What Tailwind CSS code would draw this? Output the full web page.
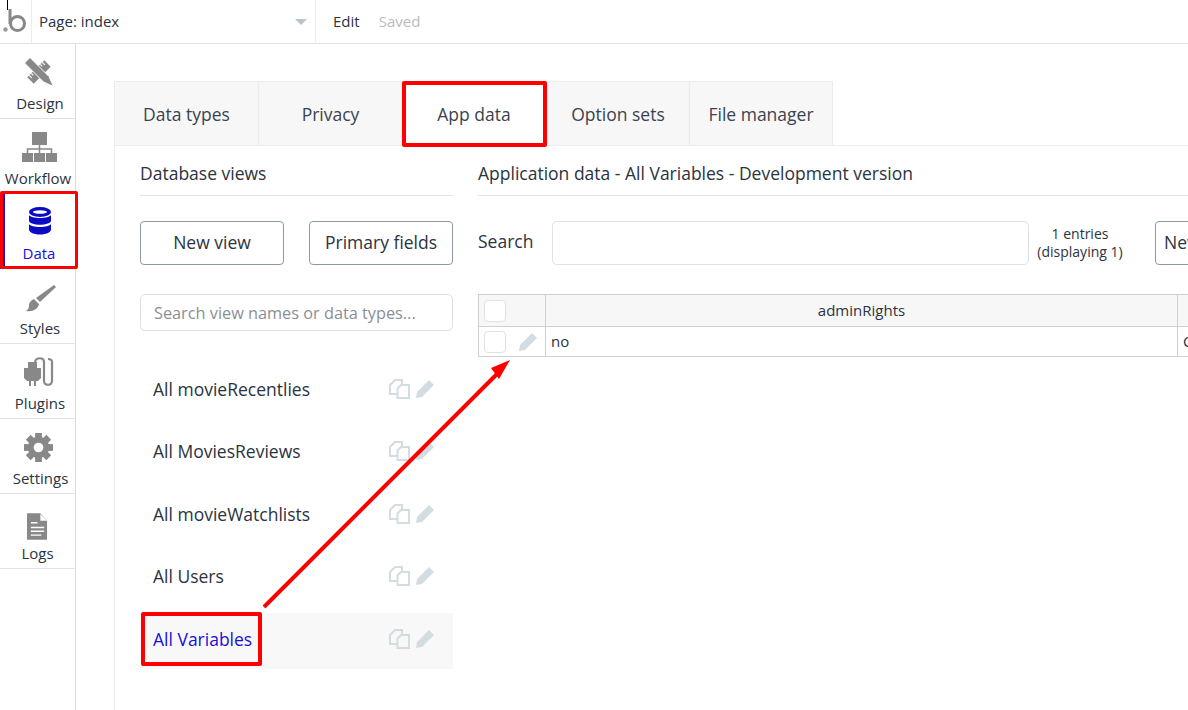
<!DOCTYPE html>
<html lang="en">
<head>
    <meta charset="UTF-8">
    <title>Data - App data</title>
    <script src="https://cdn.jsdelivr.net/npm/@tailwindcss/browser@4"></script>
</head>
<body class="bg-white">
<div class="relative w-[1188px] h-[710px] overflow-hidden font-['Open_Sans',sans-serif] text-[#2b3340]">

    <!-- top bar -->
    <header class="flex h-[44px] border-b border-[#e2e2e2]">
        <div class="relative w-[32px] border-r border-[#ececec]">
            <div class="absolute left-[7px] top-0 w-[1px] h-[10px] bg-black"></div>
            <svg class="absolute left-[3px] top-[8px]" width="24" height="26" viewBox="0 0 24 26">
                <circle cx="2.5" cy="21.5" r="2.2" fill="#999"/>
                <path d="M7 1v15" stroke="#888" stroke-width="3" fill="none"/>
                <circle cx="14.5" cy="15.5" r="7" stroke="#888" stroke-width="3" fill="none"/>
            </svg>
        </div>
        <div class="relative w-[284px] border-r border-[#ececec] pl-[7px] flex items-center text-[15px]">
            Page: index
            <div class="absolute left-[263px] top-[19px] w-0 h-0 border-l-[6px] border-r-[6px] border-t-[6px] border-l-transparent border-r-transparent border-t-[#b9c4cc]"></div>
        </div>
        <div class="flex items-center pl-[17px] gap-[19px] text-[15px]">
            <span>Edit</span>
            <span class="text-[#bbbbbb]">Saved</span>
        </div>
    </header>

    <div class="flex">
        <!-- sidebar -->
        <nav class="w-[76px] h-[666px] border-r border-[#dedede] text-[15px] shrink-0">
            <div class="h-[75px] border-b border-[#e2e2e2] flex flex-col items-center">
                <svg class="mt-[13px] ml-[3px]" width="30" height="30" viewBox="0 0 30 30" fill="#888">
                    <rect x="-12" y="-4.500" width="24" height="9" transform="translate(15 15) rotate(-45)"/>
                    <path d="M18.300 5.300l2.500 2.500M16.300 7.300l2 2M5.300 18.300l2.500 2.500M7.300 16.300l2 2" stroke="#fff" stroke-width="1.200"/>
                    <path d="M0.500 6L6 0.500 25 19.500l4.500 10-10-4.500z" stroke="#fff" stroke-width="1"/>
                </svg>
                <span class="mt-[6px] ml-[5px] leading-[20px]">Design</span>
            </div>
            <div class="h-[75px] border-b border-[#e2e2e2] flex flex-col items-center">
                <svg class="mt-[13px] ml-[5px]" width="36" height="30" viewBox="0 0 36 30">
                    <rect x="10" y="0" width="15" height="13" fill="#888"/>
                    <path d="M17.500 13v8M5.500 21v-4h24v4" stroke="#888" stroke-width="1.500" fill="none"/>
                    <rect x="0" y="21" width="11" height="9" fill="#888"/>
                    <rect x="12" y="21" width="11" height="9" fill="#888"/>
                    <rect x="24" y="21" width="11" height="9" fill="#888"/>
                </svg>
                <span class="mt-[6px] ml-[1px] leading-[20px]">Workflow</span>
            </div>
            <div class="h-[75px] border-b border-[#e2e2e2] flex flex-col items-center text-[#1a10d8] border-l-[5px] border-l-[#1a10d8]">
                <svg class="mt-[13px]" width="24" height="28" viewBox="0 0 24 28" fill="#0b0bc4">
                    <ellipse cx="12" cy="5" rx="11" ry="5"/>
                    <path d="M1 8c2 4 20 4 22 0v6c-2 5-20 5-22 0z"/>
                    <path d="M1 17c2 4 20 4 22 0v6c-2 6-20 6-22 0z"/>
                    <ellipse cx="12" cy="5" rx="7" ry="1.800" fill="#fff"/>
                </svg>
                <span class="mt-[8px] -ml-[2px] leading-[20px]">Data</span>
            </div>
            <div class="h-[75px] border-b border-[#e2e2e2] flex flex-col items-center">
                <svg class="mt-[15px] ml-[6px]" width="32" height="30" viewBox="0 0 32 30" fill="#888">
                    <path d="M29 1l2 2-16 15-4-4z"/>
                    <path d="M9 15l5 5c-1 5-6 8-13 7 3-2 3-4 3-6s2-5 5-6z"/>
                </svg>
                <span class="mt-[4px] ml-[5px] leading-[20px]">Styles</span>
            </div>
            <div class="h-[75px] border-b border-[#e2e2e2] flex flex-col items-center">
                <svg class="mt-[13px] ml-[2px]" width="32" height="30" viewBox="0 0 32 30">
                    <path d="M1 11h17v10l-3 3H4l-3-3z" fill="#888"/>
                    <path d="M5 5h9v6H5zM6 24h2v5H6zM11 24h2v5h-2z" fill="#888"/>
                    <path d="M12 5c1-5 9-5 9 0v19c0 5 8 5 8 0V5c0-3-2-3-4-3" stroke="#888" stroke-width="2.200" fill="none"/>
                </svg>
                <span class="mt-[6px] ml-[5px] leading-[20px]">Plugins</span>
            </div>
            <div class="h-[75px] border-b border-[#e2e2e2] flex flex-col items-center">
                <svg class="mt-[14px] ml-[2px]" width="29" height="29" viewBox="0 0 30 30" fill="#888">
                    <g transform="translate(15 15)">
                        <circle r="11"/>
                        <rect x="-3.500" y="-15" width="7" height="7"/>
                        <rect x="-3.500" y="-15" width="7" height="7" transform="rotate(45)"/>
                        <rect x="-3.500" y="-15" width="7" height="7" transform="rotate(90)"/>
                        <rect x="-3.500" y="-15" width="7" height="7" transform="rotate(135)"/>
                        <rect x="-3.500" y="-15" width="7" height="7" transform="rotate(180)"/>
                        <rect x="-3.500" y="-15" width="7" height="7" transform="rotate(225)"/>
                        <rect x="-3.500" y="-15" width="7" height="7" transform="rotate(270)"/>
                        <rect x="-3.500" y="-15" width="7" height="7" transform="rotate(315)"/>
                        <circle r="5" fill="#fff"/>
                    </g>
                </svg>
                <span class="mt-[6px] ml-[6px] leading-[20px]">Settings</span>
            </div>
            <div class="h-[75px] border-b border-[#e2e2e2] flex flex-col items-center">
                <svg class="mt-[19px]" width="21" height="27" viewBox="0 0 22 28">
                    <path d="M1 0h13l7 8v19a1 1 0 0 1-1 1H1a1 1 0 0 1-1-1V1a1 1 0 0 1 1-1z" fill="#888"/>
                    <path d="M14 1v7h7" fill="#fff"/>
                    <path d="M4 10h7M4 15h14M4 19h14M4 23h11" stroke="#fff" stroke-width="1.500"/>
                </svg>
                <span class="mt-[3px] leading-[20px]">Logs</span>
            </div>
        </nav>

        <!-- main panel -->
        <main class="ml-[38px] mt-[37px] w-[1100px] shrink-0 border-l border-[#ececec]">
            <div class="flex h-[65px] border-b border-[#ececec] text-[17.5px] text-[#3a4350]">
                <div class="w-[144px] pt-[1px] bg-[#f7f7f7] border-t border-r border-[#ececec] flex items-center justify-center">Data types</div>
                <div class="w-[144px] pt-[1px] bg-[#f7f7f7] border-t border-r border-[#ececec] flex items-center justify-center">Privacy</div>
                <div class="w-[144px] pt-[2px] pr-[2px] bg-white flex items-center justify-center">App data</div>
                <div class="w-[143px] pt-[1px] bg-[#f7f7f7] border-t border-r border-[#ececec] flex items-center justify-center">Option sets</div>
                <div class="w-[143px] pt-[1px] bg-[#f7f7f7] border-t border-r border-[#ececec] flex items-center justify-center">File manager</div>
            </div>

            <div class="flex pl-[25px] pt-[12px]">
                <!-- database views -->
                <section class="w-[313px] shrink-0">
                    <h2 class="h-[38px] border-b border-[#e4e4e4] text-[17.5px] leading-[31px]">Database views</h2>
                    <div class="flex justify-between mt-[25px] text-[17.5px]">
                        <button class="w-[144px] h-[44px] pb-[1px] rounded-[4px] border border-[#8a9ba5]">New view</button>
                        <button class="w-[144px] h-[44px] pb-[1px] rounded-[4px] border border-[#8a9ba5]">Primary fields</button>
                    </div>
                    <input class="block w-full h-[37px] mt-[29px] px-[13px] rounded-[5px] border border-[#dde2e5] text-[16.300px] placeholder:text-[#8b8f93]" placeholder="Search view names or data types...">
                    <ul class="mt-[26.600px] text-[17.5px]">
                        <li class="h-[62.500px] pl-[13px] pr-[18px] flex items-center justify-between">
                            <span>All movieRecentlies</span>
                            <span class="flex items-center gap-[5px]">
                                <svg width="21" height="20" viewBox="0 0 21 20" fill="none" stroke="#d3dde1" stroke-width="2"><path d="M8.500 15H1V6l5-5h7v5"/><path d="M8.500 11V9.500l3.500-3.500h8v13H8.500z"/></svg>
                                <svg width="20" height="20" viewBox="0 0 20 20" fill="#d3dde1"><path d="M14 1l5 5L7 18l-6 1 1-6z"/></svg>
                            </span>
                        </li>
                        <li class="h-[62.500px] pl-[13px] pr-[18px] flex items-center justify-between">
                            <span>All MoviesReviews</span>
                            <span class="flex items-center gap-[5px]">
                                <svg width="21" height="20" viewBox="0 0 21 20" fill="none" stroke="#d3dde1" stroke-width="2"><path d="M8.500 15H1V6l5-5h7v5"/><path d="M8.500 11V9.500l3.500-3.500h8v13H8.500z"/></svg>
                                <svg width="20" height="20" viewBox="0 0 20 20" fill="#d3dde1"><path d="M14 1l5 5L7 18l-6 1 1-6z"/></svg>
                            </span>
                        </li>
                        <li class="h-[62.500px] pl-[13px] pr-[18px] flex items-center justify-between">
                            <span>All movieWatchlists</span>
                            <span class="flex items-center gap-[5px]">
                                <svg width="21" height="20" viewBox="0 0 21 20" fill="none" stroke="#d3dde1" stroke-width="2"><path d="M8.500 15H1V6l5-5h7v5"/><path d="M8.500 11V9.500l3.500-3.500h8v13H8.500z"/></svg>
                                <svg width="20" height="20" viewBox="0 0 20 20" fill="#d3dde1"><path d="M14 1l5 5L7 18l-6 1 1-6z"/></svg>
                            </span>
                        </li>
                        <li class="h-[62.500px] pl-[13px] pr-[18px] flex items-center justify-between">
                            <span>All Users</span>
                            <span class="flex items-center gap-[5px]">
                                <svg width="21" height="20" viewBox="0 0 21 20" fill="none" stroke="#d3dde1" stroke-width="2"><path d="M8.500 15H1V6l5-5h7v5"/><path d="M8.500 11V9.500l3.500-3.500h8v13H8.500z"/></svg>
                                <svg width="20" height="20" viewBox="0 0 20 20" fill="#d3dde1"><path d="M14 1l5 5L7 18l-6 1 1-6z"/></svg>
                            </span>
                        </li>
                        <li class="h-[56px] mt-[5.400px] pb-[4px] bg-[#f8f8f8] pl-[13px] pr-[18px] flex items-center justify-between text-[#1a10d8]">
                            <span>All Variables</span>
                            <span class="flex items-center gap-[5px]">
                                <svg width="21" height="20" viewBox="0 0 21 20" fill="none" stroke="#d3dde1" stroke-width="2"><path d="M8.500 15H1V6l5-5h7v5"/><path d="M8.500 11V9.500l3.500-3.500h8v13H8.500z"/></svg>
                                <svg width="20" height="20" viewBox="0 0 20 20" fill="#d3dde1"><path d="M14 1l5 5L7 18l-6 1 1-6z"/></svg>
                            </span>
                        </li>
                    </ul>
                </section>

                <!-- application data -->
                <section class="ml-[25px] w-[720px] shrink-0">
                    <h2 class="h-[38px] border-b border-[#e4e4e4] text-[17.5px] leading-[31px]">Application data - All Variables - Development version</h2>
                    <div class="flex items-center mt-[25px] h-[44px]">
                        <span class="w-[74px] pb-[3px] text-[17.5px] shrink-0">Search</span>
                        <input class="w-[477px] h-[44px] rounded-[5px] border border-[#dde2e5] shrink-0">
                        <div class="w-[102px] text-center text-[14px] leading-[18px] shrink-0">1 entries<br>(displaying 1)</div>
                        <button class="ml-[24px] w-[120px] h-[44px] pb-[1px] rounded-[4px] border border-[#8a9ba5] text-[17.5px] text-left pl-[8px] shrink-0 whitespace-nowrap">New entry</button>
                    </div>
                    <table class="mt-[29px] w-[720px] table-fixed border-collapse text-[15px]">
                        <tr class="h-[32px] bg-[#f7f7f7]">
                            <td class="w-[67px] border border-[#cfcfcf] pl-[5px]"><div class="w-[22px] h-[22px] rounded-[4px] bg-white border border-[#e2e2e2]"></div></td>
                            <td class="w-[632px] border border-[#cfcfcf] text-center">adminRights</td>
                            <td class="border border-[#cfcfcf]"></td>
                        </tr>
                        <tr class="h-[30px]">
                            <td class="border border-[#cfcfcf] pl-[5px]">
                                <div class="flex items-center justify-between pr-[7px]">
                                    <div class="w-[22px] h-[22px] rounded-[4px] bg-white border border-[#e2e2e2]"></div>
                                    <svg width="20" height="20" viewBox="0 0 20 20" fill="#d3dde1"><path d="M14 1l5 5L7 18l-6 1 1-6z"/></svg>
                                </div>
                            </td>
                            <td class="border border-[#cfcfcf] pl-[5px]">no</td>
                            <td class="border border-[#cfcfcf] pl-[5px]">C</td>
                        </tr>
                    </table>
                </section>
            </div>
        </main>
    </div>

    <!-- red annotations pasted on top of the screenshot -->
    <div class="absolute left-0 top-[191px] w-[78px] h-[78px] border-[3px] border-[#fe0000] rounded-[2px]"></div>
    <div class="absolute left-[402px] top-[81px] w-[145px] h-[66px] border-[4px] border-[#fe0000] rounded-[2px]"></div>
    <div class="absolute left-[141px] top-[612px] w-[121px] h-[54px] border-[4px] border-[#fe0000] rounded-[2px]"></div>
    <svg class="absolute left-0 top-0 pointer-events-none" width="1188" height="710">
        <path d="M264 607L497 374" stroke="#fe0000" stroke-width="4" fill="none"/>
        <path d="M510 360L499 379L491 368z" fill="#fe0000"/>
    </svg>
</div>
</body>
</html>
